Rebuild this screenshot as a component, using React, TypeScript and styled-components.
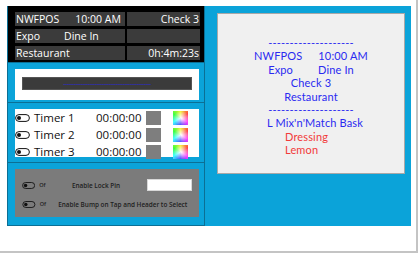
import styled, { createGlobalStyle } from "styled-components";

const GlobalStyle = createGlobalStyle`
  html, body {
    margin: 0;
    padding: 0;
    background: #fff;
  }
  body {
    font-family: "Open Sans", "Noto Sans", sans-serif;
  }
`;

//************************************************************

const Window = styled.div`
  box-sizing: border-box;
  width: 418px;
  height: 253px;
  background: #fff;
  border-right: 2px solid #c4c4c4;
  border-bottom: 2px solid #c4c4c4;
  padding: 6px 5px 0 7px;
`;

const Board = styled.div`
  display: grid;
  grid-template-columns: 198px 1fr;
  height: 220px;
  background: #0ba3d9;
`;

const LeftColumn = styled.div`
  display: flex;
  flex-direction: column;
`;

const Section = styled.div<{ $h: number; $dark?: boolean }>`
  box-sizing: border-box;
  height: ${(p) => p.$h}px;
  border: 1px solid #0b6f95;
  border-top: none;
  background: ${(p) => (p.$dark ? "#000" : "transparent")};
  padding: 6px 6px 0 7px;
`;

const HeaderRows = styled.div`
  display: flex;
  flex-direction: column;
  gap: 3px;
`;

const HeaderRow = styled.div`
  display: grid;
  grid-template-columns: 110px 73px;
  gap: 2px;
  height: 14px;
`;

const HeaderCell = styled.div<{ $right?: boolean }>`
  background: #3b3b3b;
  color: #fff;
  font-size: 10.5px;
  line-height: 14px;
  padding: 0 1px;
  display: flex;
  justify-content: ${(p) => (p.$right ? "flex-end" : "flex-start")};
  white-space: nowrap;
  overflow: hidden;
`;

const Gap = styled.span<{ $w: number }>`
  display: inline-block;
  width: ${(p) => p.$w}px;
`;

const WhiteBox = styled.div<{ $h: number }>`
  box-sizing: border-box;
  width: 184px;
  height: ${(p) => p.$h}px;
  background: #fff;
`;

const BarBox = styled(WhiteBox)`
  padding: 8px 7px;
`;

const DarkBar = styled.div`
  height: 13px;
  background: #3b3b3b;
  border: 1px solid #555;
  box-sizing: border-box;
  display: flex;
  justify-content: center;
  align-items: center;
  color: #2a2ad8;
  font-size: 7px;
  line-height: 7px;
  letter-spacing: -0.5px;
  overflow: hidden;
`;

const TimerBox = styled(WhiteBox)`
  display: flex;
  flex-direction: column;
  padding-top: 1px;
  gap: 3px;
`;

const TimerRow = styled.div`
  display: grid;
  grid-template-columns: 19px 62px 50px 27px 15px;
  align-items: center;
  height: 14px;
  color: #111;
  font-size: 11.5px;
`;

const Swatch = styled.div`
  width: 15px;
  height: 14px;
  background: #7e7e7e;
`;

const Spectrum = styled.div`
  width: 15px;
  height: 14px;
  background: radial-gradient(circle at 55% 50%, #fff 0%, rgba(255, 255, 255, 0) 70%),
    conic-gradient(#f0f020, #ff4040, #ff40ff, #4040ff, #40ffff, #40ff40, #f0f020);
`;

const SettingsBox = styled.div`
  box-sizing: border-box;
  width: 184px;
  height: 48px;
  background: #7b7b7b;
  display: flex;
  flex-direction: column;
  gap: 7px;
  padding: 10px 7px 0 7px;
`;

const SettingRow = styled.div`
  display: flex;
  align-items: center;
  height: 12px;
  font-size: 6.4px;
  font-weight: 600;
  color: #1e1e1e;
`;

const OffLabel = styled.span`
  font-size: 5.5px;
  margin-left: 4px;
  width: 14px;
`;

const SettingText = styled.span<{ $w: number }>`
  width: ${(p) => p.$w}px;
  text-align: center;
  white-space: nowrap;
`;

const PinInput = styled.div`
  width: 47px;
  height: 12px;
  background: #fff;
  border: 1px solid #d8d8d8;
  box-sizing: border-box;
  margin-left: 8px;
`;

const RightColumn = styled.div`
  padding: 7px 6px 0 12px;
`;

const Ticket = styled.div`
  box-sizing: border-box;
  height: 161px;
  background: #f0f0f0;
  border: 1px solid #a8a8a8;
  padding-top: 22px;
  display: flex;
  flex-direction: column;
  align-items: center;
  font-family: Lato, "Open Sans", sans-serif;
  font-size: 11px;
  letter-spacing: 0.15px;
  line-height: 13.4px;
  color: #2a2af0;
`;

const TicketLine = styled.div<{ $red?: boolean; $indent?: number }>`
  height: 13.4px;
  white-space: nowrap;
  color: ${(p) => (p.$red ? "#f23a3a" : "#2a2af0")};
  margin-left: ${(p) => p.$indent || 0}px;
`;

const RedLine = styled(TicketLine)`
  align-self: flex-start;
`;

const Dashes = styled(TicketLine)`
  letter-spacing: 0.2px;
`;

const Toggle = ({ big }: { big?: boolean }) => (
  <svg width={big ? 15 : 14} height={big ? 8 : 7} viewBox="0 0 15 8">
    <rect x="0.6" y="0.6" width="13.8" height="6.8" rx="3.4" fill="none" stroke="#111" strokeWidth="1" />
    <circle cx="4" cy="4" r="2" fill="#111" />
  </svg>
);

const timers = ["Timer 1", "Timer 2", "Timer 3"];
const dashLine = "-".repeat(20);

export default function App() {
  return (
    <>
      <GlobalStyle />
      <Window>
        <Board>
          <LeftColumn>
            <Section $h={57} $dark>
              <HeaderRows>
                <HeaderRow>
                  <HeaderCell>
                    NWFPOS<Gap $w={16} />10:00 AM
                  </HeaderCell>
                  <HeaderCell $right>Check 3</HeaderCell>
                </HeaderRow>
                <HeaderRow>
                  <HeaderCell>
                    Expo<Gap $w={24} />Dine In
                  </HeaderCell>
                  <HeaderCell $right />
                </HeaderRow>
                <HeaderRow>
                  <HeaderCell>Restaurant</HeaderCell>
                  <HeaderCell $right>0h:4m:23s</HeaderCell>
                </HeaderRow>
              </HeaderRows>
            </Section>

            <Section $h={40}>
              <BarBox $h={31}>
                <DarkBar>{"-".repeat(50)}</DarkBar>
              </BarBox>
            </Section>

            <Section $h={60}>
              <TimerBox $h={48}>
                {timers.map((t) => (
                  <TimerRow key={t}>
                    <Toggle big />
                    <span>{t}</span>
                    <span>00:00:00</span>
                    <Swatch />
                    <Spectrum />
                  </TimerRow>
                ))}
              </TimerBox>
            </Section>

            <Section $h={63}>
              <SettingsBox>
                <SettingRow>
                  <Toggle />
                  <OffLabel>Of</OffLabel>
                  <SettingText $w={92}>Enable Lock Pin</SettingText>
                  <PinInput />
                </SettingRow>
                <SettingRow>
                  <Toggle />
                  <OffLabel>Of</OffLabel>
                  <SettingText $w={141}>Enable Bump on Tap and Header to Select</SettingText>
                </SettingRow>
              </SettingsBox>
            </Section>
          </LeftColumn>

          <RightColumn>
            <Ticket>
              <Dashes>{dashLine}</Dashes>
              <TicketLine>
                NWFPOS<Gap $w={16} />10:00 AM
              </TicketLine>
              <TicketLine>
                Expo<Gap $w={25} />Dine In
              </TicketLine>
              <TicketLine>Check 3</TicketLine>
              <TicketLine>Restaurant</TicketLine>
              <Dashes>{dashLine}</Dashes>
              <TicketLine $indent={8}>L Mix'n'Match Bask</TicketLine>
              <RedLine $red $indent={67}>Dressing</RedLine>
              <RedLine $red $indent={67}>Lemon</RedLine>
            </Ticket>
          </RightColumn>
        </Board>
      </Window>
    </>
  );
}
